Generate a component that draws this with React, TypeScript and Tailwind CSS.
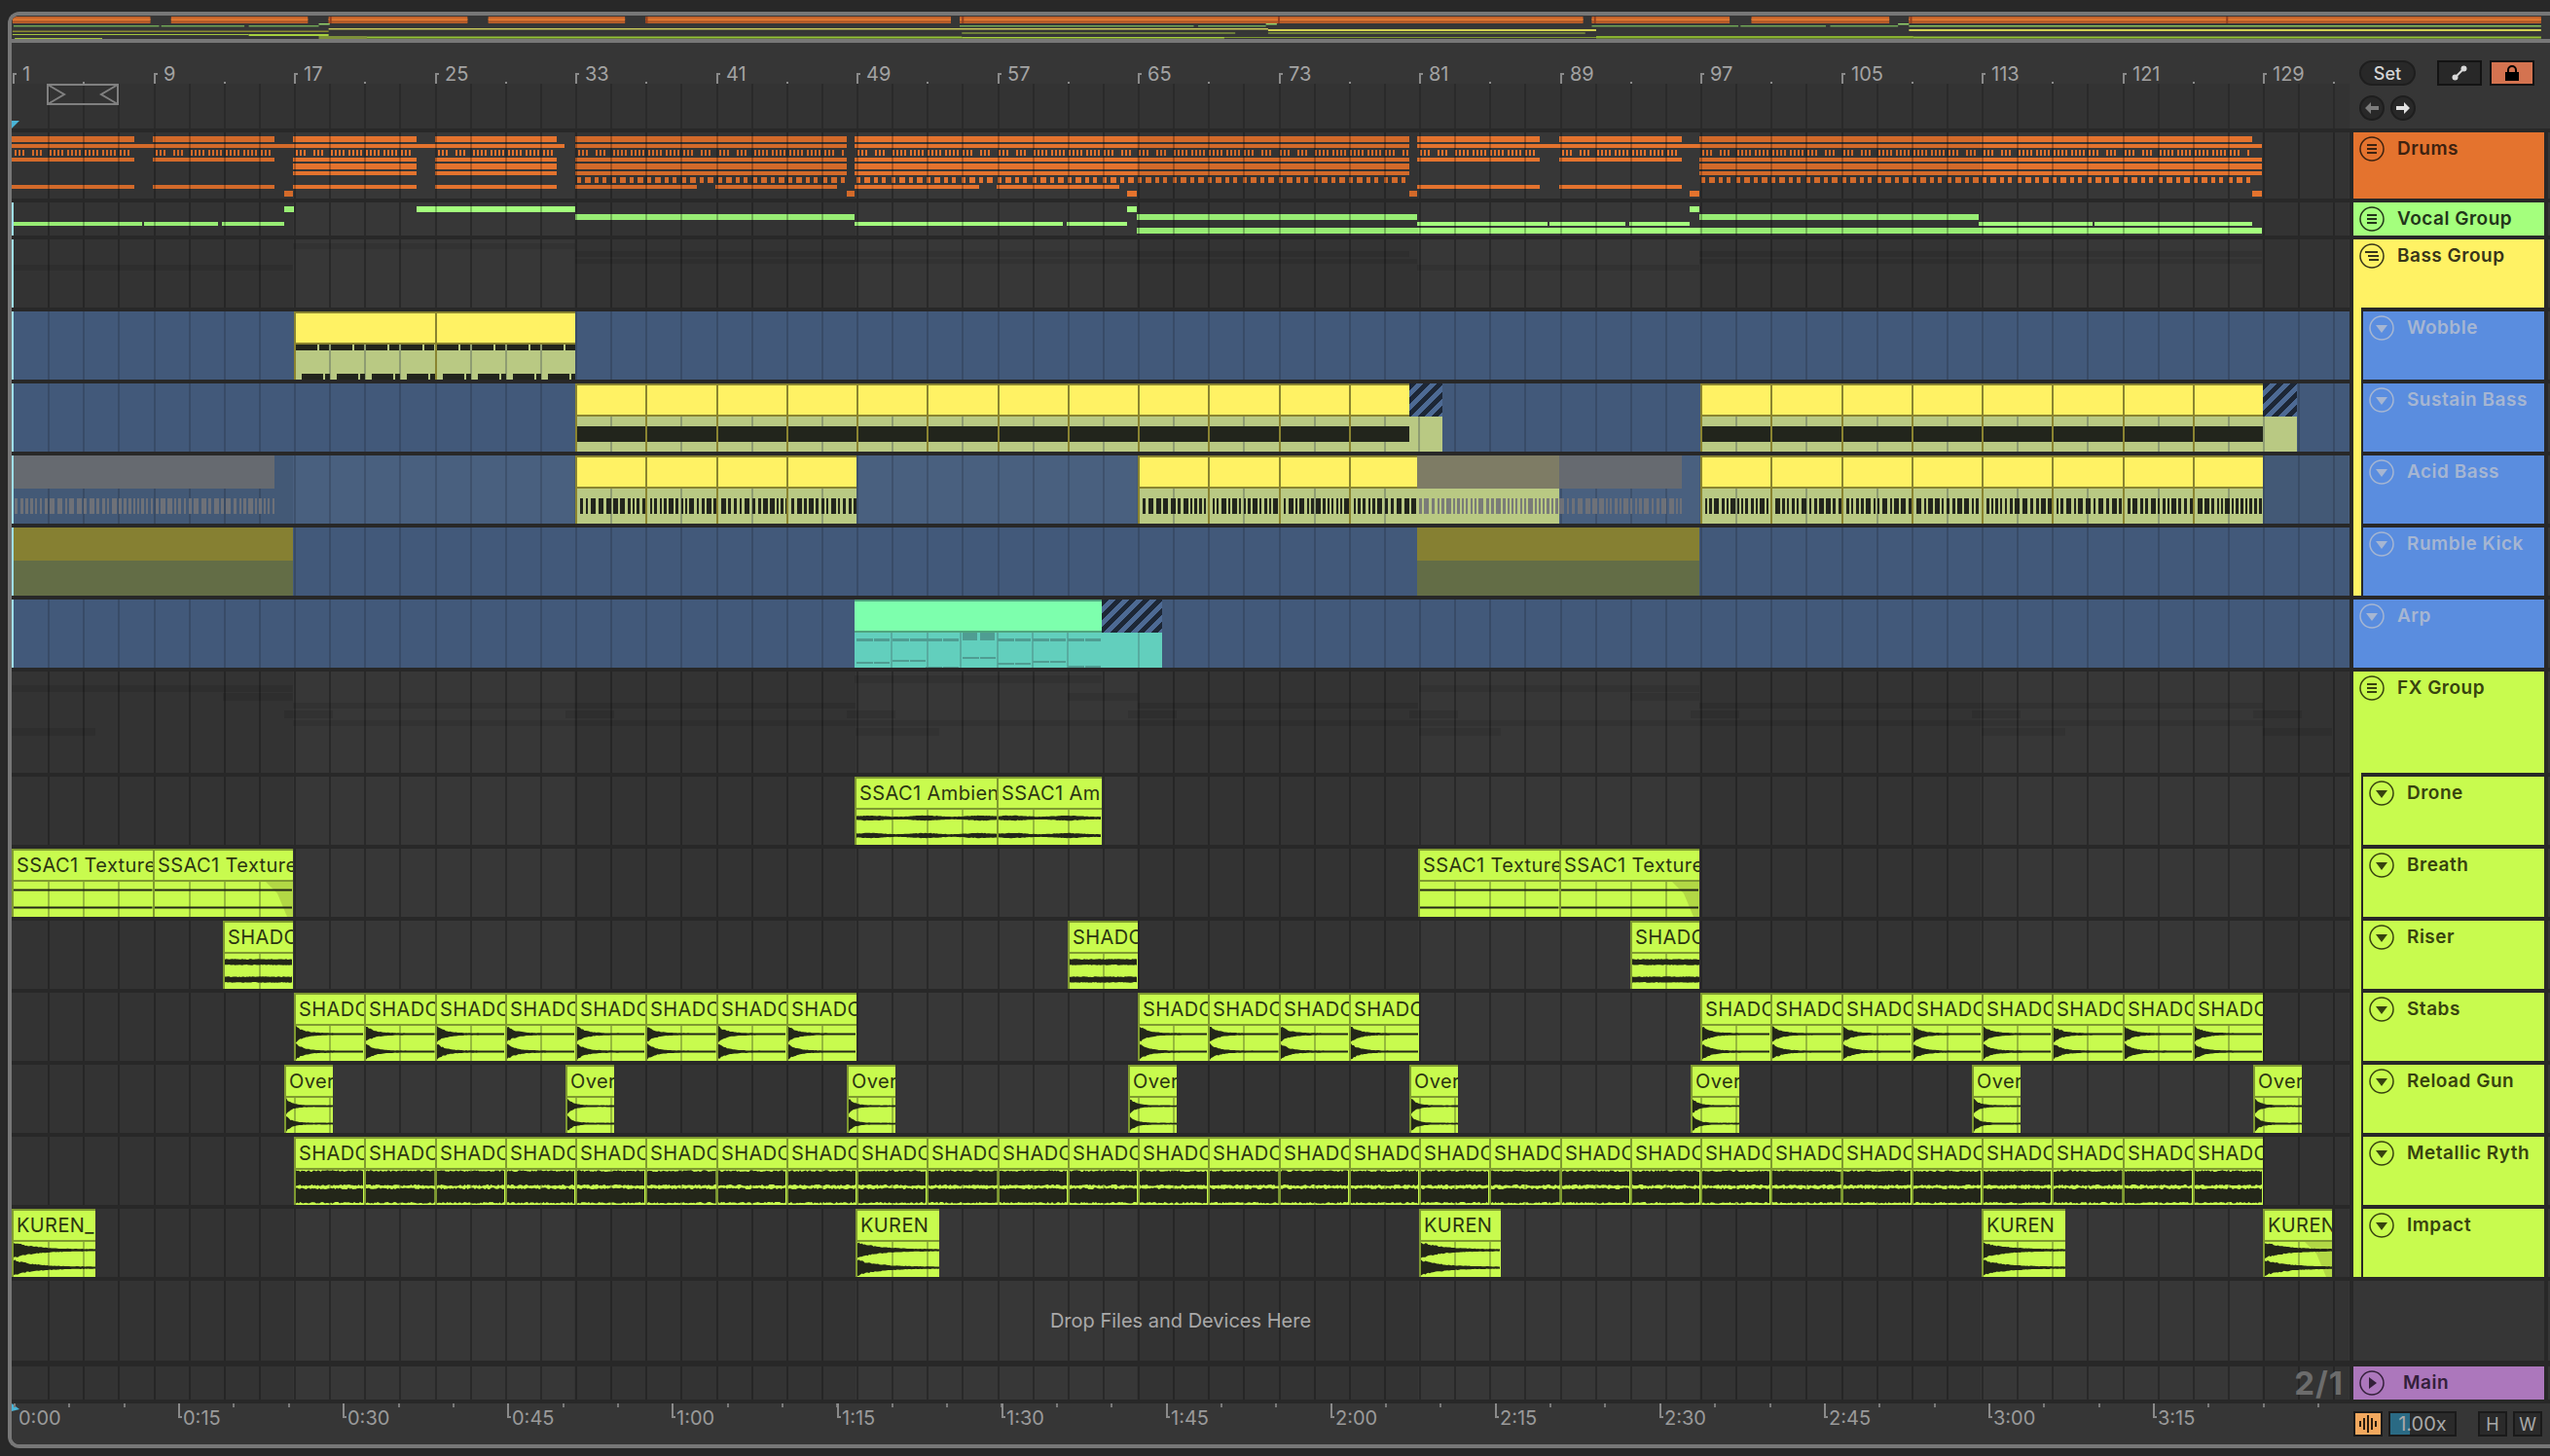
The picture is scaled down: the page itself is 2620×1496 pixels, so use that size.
import { ReactNode } from 'react';

type Seg = [number, number];

const barX = (bar: number) => Math.round(13 + 18.0625 * (bar - 1));
const rnd = (i: number) => {
  const v = Math.sin(i * 12.9898) * 43758.5453;
  return v - Math.floor(v);
};

const GRID = Array.from({ length: 66 }, (_, i) => barX(3 + i * 2));
const SHADE: Seg[] = [[1, 17], [33, 49], [65, 81], [97, 113], [129, 134]];

// all note drawings use page coordinates through the viewBox
const Bars = ({ segs, y, h, fill, opacity }: { segs: Seg[]; y: number; h: number; fill: string; opacity?: number }) => (
  <>
    {segs.map(([a, b]) => (
      <rect key={a} x={a} y={y} width={b - a} height={h} fill={fill} opacity={opacity} />
    ))}
  </>
);

const Lane = ({ h, blue, light, under, children, cyan }: { h: number; blue?: boolean; light?: boolean; under?: ReactNode; children?: ReactNode; cyan?: boolean }) => (
  <div
    className={`relative w-[2402px] shrink-0 overflow-hidden ${light ? 'bg-[#49607f]' : blue ? 'bg-[#42597a]' : 'bg-[#373737]'}`}
    style={{ height: h }}
  >
    {under}
    {(!blue || light) &&
      SHADE.map(([a, b]) => (
        <div key={a} className="absolute top-0 bottom-0 bg-black/[0.07]" style={{ left: barX(a) - 13, width: Math.min(barX(b), 2414) - barX(a) }} />
      ))}
    {GRID.map((x) => (
      <div key={x} className={`absolute top-0 bottom-0 w-[2px] ${blue ? 'bg-black/15' : 'bg-black/25'}`} style={{ left: x - 12 }} />
    ))}
    {children}
    {cyan && <div className="absolute top-0 bottom-0 left-0 w-[2px] bg-[#9fdfe9]" />}
  </div>
);

const NoteSvg = ({ y, h, children }: { y: number; h: number; children: ReactNode }) => (
  <svg className="absolute top-0 left-0" width={2402} height={h} viewBox={`12 ${y} 2402 ${h}`}>
    {children}
  </svg>
);

const channel = (cy: number, w: number, amp: (x: number) => number, seed: number) => {
  const top: string[] = [];
  const bot: string[] = [];
  for (let x = 0; x <= w; x += 1.5) {
    const a = amp(x);
    top.push(`${x},${(cy - a * (0.85 + 0.25 * rnd(x + seed))).toFixed(1)}`);
    bot.unshift(`${x},${(cy + a * (0.85 + 0.25 * rnd(x + seed + 7))).toFixed(1)}`);
  }
  return [...top, ...bot].join(' ');
};

type Wave = 'stab' | 'over' | 'dense' | 'drone' | 'line' | 'riser' | 'kuren';
const AMP: Record<Wave, (x: number) => number> = {
  stab: (x) => 7 * Math.exp(-x / 9) + 1,
  over: (x) => 7 * Math.exp(-x / 6) + 0.9,
  dense: () => 7.5,
  drone: (x) => 2 + Math.sin(x / 9) * 0.6,
  line: () => 1,
  riser: () => 3,
  kuren: (x) => 7 * Math.exp(-x / 22) + 1,
};

const AudioClip = ({ x0, x1, title, wave, fade }: { x0: number; x1: number; title: string; wave: Wave; fade?: boolean }) => {
  const w = x1 - x0 - 2;
  const lines = GRID.filter((g) => g > x0 + 4 && g < x1 - 1);
  return (
    <div
      className="absolute top-0 bottom-0 flex flex-col overflow-hidden border-t-2 border-l-2 border-[#7f9a30] bg-[#c8fb4e]"
      style={{ left: x0 - 12, width: x1 - x0 }}
    >
      <div className="h-[32px] shrink-0 overflow-hidden whitespace-nowrap border-b-2 border-[#7f9a30] pl-[3px] text-[20px] leading-[30px] tracking-[0.02em] text-[#2b3512]">
        {title}
      </div>
      <svg className="block shrink-0" width={w} height={36}>
        {fade && <polygon points={`${w - 28},0 ${w},0 ${w},36 ${w - 6},36 ${w - 16},12`} fill="#b2d845" />}
        {lines.map((g) => (
          <rect key={g} x={g - x0 - 2} y={0} width={2} height={36} fill="#95b93c" />
        ))}
        <polygon points={channel(8.5, w, AMP[wave], x0)} fill="#232619" />
        <polygon points={channel(26.5, w, AMP[wave], x0 + 31)} fill="#232619" />
      </svg>
    </div>
  );
};

const MidiClip = ({ x0, x1, kind }: { x0: number; x1: number; kind: 'wobble' | 'sustain' | 'acid' }) => {
  const w = x1 - x0 - 2;
  const lines = GRID.filter((g) => g > x0 + 4 && g < x1 - 1);
  const notes: ReactNode[] = [];
  if (kind === 'sustain') notes.push(<rect key="s" x={0} y={10} width={w} height={16} fill="#22251c" />);
  if (kind === 'wobble') {
    for (let i = 0; i * 36 < w; i++) {
      notes.push(<rect key={`a${i}`} x={i * 36} y={0} width={22} height={6} fill="#22251c" />);
      notes.push(<rect key={`b${i}`} x={i * 36 + 24} y={0} width={10} height={6} fill="#22251c" />);
      notes.push(<rect key={`c${i}`} x={i * 36 + 6} y={30} width={22} height={6} fill="#22251c" />);
      notes.push(<rect key={`d${i}`} x={i * 36 + 30} y={30} width={5} height={6} fill="#22251c" />);
    }
  }
  if (kind === 'acid') {
    let x = 3;
    let i = x0;
    while (x < w) {
      const nw = rnd(i) > 0.7 ? 5 : rnd(i) > 0.35 ? 3 : 2;
      notes.push(<rect key={`n${x}`} x={x} y={10} width={nw} height={16} fill="#22251c" />);
      x += nw + (rnd(i + 3) > 0.6 ? 3 : 2);
      i++;
    }
  }
  return (
    <div
      className="absolute top-0 bottom-0 flex flex-col overflow-hidden border-t-2 border-l-2 border-[#8a8430] bg-[#fff264]"
      style={{ left: x0 - 12, width: x1 - x0 }}
    >
      <div className="h-[32px] shrink-0 border-b-2 border-[#8a8430]" />
      <svg className="block shrink-0 bg-[#b9c983]" width={w} height={36}>
        {lines.map((g) => (
          <rect key={g} x={g - x0 - 2} y={0} width={2} height={36} fill="#8e9c72" />
        ))}
        {notes}
      </svg>
    </div>
  );
};

const Hatch = ({ x0, x1 }: { x0: number; x1: number }) => (
  <div
    className="absolute top-0 h-[34px] bg-[repeating-linear-gradient(135deg,#1d2736_0,#1d2736_5px,#4d6a94_5px,#4d6a94_10px)]"
    style={{ left: x0 - 12, width: x1 - x0 }}
  />
);

const Tail = ({ x0, x1, line }: { x0: number; x1: number; line: number }) => (
  <div className="absolute bottom-0 h-[36px] bg-[#b9c983]" style={{ left: x0 - 12, width: x1 - x0 }}>
    <div className="absolute top-0 bottom-0 w-[2px] bg-[#8e9c72]" style={{ left: line - x0 }} />
  </div>
);

const every = (from: number, to: number, step: number) => {
  const out: Seg[] = [];
  for (let b = from; b < to; b += step) out.push([barX(b), barX(b + step)]);
  return out;
};

// drum lane

const secA: Seg[] = [[12, 138], [157, 282], [301, 428], [447, 572]];
const secB: Seg[] = [[591, 870], [878, 1448]];
const secC: Seg[] = [[1456, 1582], [1602, 1728]];

const ticks = (segs: Seg[]) => {
  const out: Seg[] = [];
  segs.forEach(([a, b]) => {
    for (let i = 0; a + i * 18.0625 < b; i++) {
      const s = a + i * 18.0625;
      const n = [3, 3, 4, 4, 4, 4, 3, 3][i % 8];
      for (let k = 0; k < n; k++) {
        const t = Math.round(s + 3 + k * 4);
        if (t + 2 <= b) out.push([t, t + 2]);
      }
    }
  });
  return out;
};

const blocks = (segs: Seg[]) => {
  const out: Seg[] = [];
  segs.forEach(([a, b]) => {
    for (let i = 0; a + i * 18.0625 < b; i++) {
      const s = Math.round(a + 2 + i * 18.0625);
      if (s + 4 <= b) out.push([s, s + 4]);
      const w = i % 4 === 1 ? 4 : 6;
      if (s + 8 + w <= b) out.push([s + 8, s + 8 + w]);
    }
  });
  return out;
};

const DrumNotes = () => {
  const c = '#e4732e';
  return (
    <NoteSvg y={136} h={68}>
      <Bars segs={[...secA, ...secB, ...secC, [1746, 2314]]} y={140} h={6} fill={c} />
      <Bars segs={[[12, 580], ...secB, [1456, 2324]]} y={148} h={4} fill={c} />
      <Bars segs={ticks([...secA, ...secB, ...secC, [1746, 2314]])} y={154} h={6} fill={c} />
      <Bars segs={[...secA, ...secB, ...secC, [1746, 2324]]} y={162} h={4} fill={c} />
      <Bars segs={[[301, 428], [447, 572], ...secB, [1746, 2324]]} y={168} h={6} fill={c} />
      <Bars segs={[[301, 428], [447, 572], ...secB, [1746, 2324]]} y={176} h={4} fill={c} />
      <Bars segs={blocks([...secB, [1746, 2314]])} y={182} h={6} fill={c} />
      <Bars segs={[...secA, [591, 716], [735, 860], [878, 1006], [1024, 1150], ...secC]} y={190} h={4} fill={c} />
      <Bars segs={[[292, 301], [870, 878], [1158, 1168], [1448, 1456], [1736, 1746], [2314, 2324]]} y={196} h={6} fill={c} />
    </NoteSvg>
  );
};

const VocalNotes = () => {
  const c = '#a4ff7d';
  return (
    <NoteSvg y={208} h={34}>
      <Bars segs={[[292, 302], [428, 591], [1158, 1168], [1736, 1746]]} y={212} h={6} fill={c} />
      <Bars segs={[[591, 878], [1168, 1456], [1746, 2033]]} y={220} h={6} fill={c} />
      <Bars segs={[[13, 146], [148, 224], [228, 292], [878, 1092], [1096, 1158], [1456, 1590], [1592, 1670], [1674, 1736], [2033, 2150], [2152, 2314]]} y={228} h={4} fill={c} />
      <Bars segs={[[1168, 2324]]} y={234} h={6} fill={c} />
    </NoteSvg>
  );
};

const BassBands = () => (
  <NoteSvg y={246} h={70}>
    <Bars segs={[[301, 591]]} y={250} h={6} fill="#000" opacity={0.08} />
    <Bars segs={[[591, 1448], [1746, 2324]]} y={258} h={6} fill="#000" opacity={0.08} />
    <Bars segs={[[591, 1456], [1746, 2324]]} y={266} h={5} fill="#000" opacity={0.08} />
    <Bars segs={[[12, 301], [1456, 1746]]} y={272} h={6} fill="#000" opacity={0.08} />
  </NoteSvg>
);

const overs = [292, 581, 870, 1159, 1448, 1737, 2026, 2315];

const FxBands = () => (
  <NoteSvg y={690} h={104}>
    <Bars segs={[[878, 1132]]} y={694} h={8} fill="#000" opacity={0.08} />
    <Bars segs={[[12, 301], [1458, 1746]]} y={704} h={7} fill="#000" opacity={0.08} />
    <Bars segs={[[229, 301], [1097, 1169], [1675, 1746]]} y={712} h={8} fill="#000" opacity={0.08} />
    <Bars segs={[[301, 879], [1169, 1457], [1746, 2325]]} y={722} h={6} fill="#000" opacity={0.08} />
    <Bars segs={overs.map((x) => [x, x + 50] as Seg)} y={730} h={8} fill="#000" opacity={0.08} />
    <Bars segs={[[301, 2325]]} y={740} h={6} fill="#000" opacity={0.08} />
    <Bars segs={[[12, 98], [879, 965], [1458, 1542], [2036, 2122], [2325, 2396]]} y={748} h={8} fill="#000" opacity={0.08} />
  </NoteSvg>
);

const ArpLower = () => {
  const spans = [880, 917, 951, 989, 1025, 1061, 1097];
  const lows = [30, 28, 35, 25, 31, 29, 34];
  return (
    <div className="absolute top-0 bottom-0 flex flex-col" style={{ left: 878 - 12, width: 254 }}>
      <div className="h-[34px] shrink-0 border-t-2 border-b-2 border-[#4fa57e] bg-[#7dffad]" />
      <svg className="block bg-[#62cfbd]" width={254} height={36} viewBox="878 0 254 36">
        {spans.map((x, i) => (
          <g key={x} fill="#4f9d92">
            <rect x={x + 35} y={0} width={2} height={36} fill="#57aca0" />
            {i === 3 ? (
              <>
                <rect x={x} y={0} width={15} height={8} />
                <rect x={x + 18} y={0} width={15} height={8} />
              </>
            ) : (
              <>
                <rect x={x} y={6} width={17} height={3} />
                <rect x={x + 18} y={6} width={16} height={3} />
              </>
            )}
            <rect x={x} y={lows[i]} width={17} height={2} />
            <rect x={x + 18} y={lows[i]} width={16} height={2} />
          </g>
        ))}
      </svg>
    </div>
  );
};

// group / track headers

const DIM = 'text-[#a6b6d2]';

const Icon = ({ kind }: { kind: 'eq' | 'stag' | 'down' | 'right' }) => (
  <svg width={26} height={26} viewBox="0 0 26 26" className="shrink-0" fill="currentColor" stroke="none">
    <circle cx={13} cy={13} r={12} fill="none" stroke="currentColor" strokeWidth={1.5} />
    {kind === 'eq' && (
      <>
        <rect x={8} y={8} width={10} height={2} />
        <rect x={8} y={12} width={10} height={2} />
        <rect x={8} y={16} width={10} height={2} />
      </>
    )}
    {kind === 'stag' && (
      <>
        <rect x={6} y={8} width={13} height={2} />
        <rect x={9} y={12} width={11} height={2} />
        <rect x={10} y={16} width={10} height={2} />
      </>
    )}
    {kind === 'down' && <polygon points="7,10 19,10 13,18" />}
    {kind === 'right' && <polygon points="10,7 10,19 18,13" />}
  </svg>
);

const Head = ({ name, bg, text, icon, gap = 'gap-[13px]' }: { name: string; bg: string; text: string; icon: 'eq' | 'stag' | 'down' | 'right'; gap?: string }) => (
  <div className={`flex min-w-0 flex-1 items-start pt-1 pl-1.5 ${bg} ${text} ${gap}`}>
    <Icon kind={icon} />
    <span className="text-[19px] font-semibold leading-[26px] tracking-[0.5px] whitespace-nowrap">{name}</span>
  </div>
);

const Row = ({ lane, head }: { lane: ReactNode; head: ReactNode }) => (
  <div className="flex shrink-0 items-stretch">
    {lane}
    <div className="ml-1 flex w-[196px] shrink-0">{head}</div>
    <div className="ml-1 w-[2px] shrink-0 bg-[#363636]" />
  </div>
);

const Child = ({ name, strip, bg, text }: { name: string; strip: string; bg: string; text: string }) => (
  <>
    <div className={`-mt-1 w-2 shrink-0 ${strip}`} />
    <div className="w-[2px] shrink-0" />
    <Head name={name} bg={bg} text={text} icon="down" />
  </>
);

// overview strip across the top

const ox = (x: number) => 2 + (x - 13) * 1.1237;

const Overview = () => {
  const os = (segs: Seg[]) => segs.map(([a, b]) => [ox(a), ox(b)] as Seg);
  const orange = os([...secA, ...secB, ...secC, [1746, 2324]]);
  return (
    <svg className="block h-[24px] w-full bg-[#363636]" width={2608} height={24} viewBox="0 16 2608 24">
      <Bars segs={orange} y={17} h={7} fill="#c2622b" />
      <Bars segs={orange} y={19} h={2} fill="#dc7530" />
      <Bars segs={orange} y={22} h={1} fill="#a85426" />
      {every(17, 129, 16).map(([a]) => (
        <rect key={a} x={ox(a)} y={17} width={2} height={7} fill="#96401f" />
      ))}
      <Bars segs={os([[13, 146], [148, 224], [228, 292], [878, 1092], [1096, 1158], [1456, 1590], [1592, 1670], [1674, 1736]])} y={26} h={1.5} fill="#6fa455" />
      <Bars segs={os([[292, 302], [1158, 1168], [1736, 1746]])} y={24} h={1.5} fill="#93d36c" />
      <Bars segs={os([[1746, 2324]])} y={26} h={1.5} fill="#86c05c" />
      <Bars segs={os([[12, 301]])} y={31.5} h={1.5} fill="#8a8a30" />
      <Bars segs={os([[301, 1160]])} y={29} h={1.5} fill="#c8c85a" />
      <Bars segs={os([[1160, 1460], [1746, 2324]])} y={30} h={2} fill="#d2d052" />
      <Bars segs={os([[12, 228]])} y={35} h={1} fill="#a3c63e" />
      <Bars segs={os([[228, 301]])} y={35} h={2} fill="#a6d03f" />
      <Bars segs={os([[880, 1130], [1160, 1450]])} y={33.5} h={1} fill="#a3c63e" />
      <Bars segs={os([[14, 94]])} y={39} h={1} fill="#a3c63e" />
      <Bars segs={os([[292, 336]])} y={37} h={3} fill="#7d8f3a" />
      <Bars segs={os([[336, 880]])} y={37.5} h={2} fill="#93c235" />
      <Bars segs={os([[880, 1120]])} y={38} h={1.5} fill="#a4cf3c" />
      <Bars segs={os([[1120, 1460]])} y={38} h={1} fill="#7d9a30" />
      <Bars segs={os([[1460, 1750]])} y={37} h={2.5} fill="#88b030" />
      <Bars segs={os([[1750, 2324]])} y={37.5} h={2} fill="#93c235" />
    </svg>
  );
};

// rulers

const BAR_LABELS = Array.from({ length: 17 }, (_, i) => 1 + i * 8);
const TIMES = ['0:00', '0:15', '0:30', '0:45', '1:00', '1:15', '1:30', '1:45', '2:00', '2:15', '2:30', '2:45', '3:00', '3:15'];

const TopRuler = () => (
  <div className="relative h-[88px] w-[2402px] shrink-0 overflow-hidden text-[#a3a3a3]">
    <div className="absolute inset-x-0 top-[42px] bottom-0 bg-[#333333]" />
    {GRID.map((x) => (
      <div key={x} className="absolute top-[42px] bottom-0 w-[2px] bg-[#2a2a2a]" style={{ left: x - 12 }} />
    ))}
    {BAR_LABELS.map((b) => (
      <div key={b} className="absolute top-0 h-[42px]" style={{ left: barX(b) - 12 }}>
        <div className="absolute top-[32px] left-0 h-[10px] w-[2px] bg-[#8a8a8a]" />
        <div className="absolute top-[31px] left-0 h-[2px] w-[4px] bg-[#8a8a8a]" />
        <div className="absolute top-[40px] left-[72px] h-[2px] w-[2px] bg-[#8a8a8a]" />
        <span className="absolute top-[20px] left-[10px] text-[20px] leading-[24px]">{b}</span>
      </div>
    ))}
    <svg className="absolute top-[42px] left-[36px]" width={74} height={22} fill="none" stroke="#808080" strokeWidth={2}>
      <rect x={1} y={1} width={72} height={20} />
      <polyline points="1,1 18,11 1,21" />
      <polyline points="73,1 56,11 73,21" />
    </svg>
    <svg className="absolute bottom-0 left-0" width={8} height={8}>
      <polygon points="0,0 8,0 0,8" fill="#4ab4d6" />
    </svg>
  </div>
);

const BottomRuler = () => (
  <div className="relative h-[42px] w-[2402px] shrink-0 overflow-hidden text-[#9a9a9a]">
    <svg className="absolute top-0 left-0" width={8} height={8}>
      <polygon points="0,0 8,6 0,8" fill="#4ab4d6" />
    </svg>
    {Array.from({ length: 43 }, (_, i) => i).map((i) => (
      <div key={i} className="absolute top-0 h-[4px] w-[2px] bg-[#7a7a7a]" style={{ left: Math.round(2 + i * 56.36) }} />
    ))}
    {TIMES.map((t, i) => (
      <div key={t} className="absolute top-0" style={{ left: Math.round(2 + i * 169.1) }}>
        {i > 0 && <div className="absolute top-0 left-0 h-[15px] w-[2px] bg-[#8a8a8a]" />}
        {i > 0 && <div className="absolute top-[13px] left-0 h-[2px] w-[4px] bg-[#8a8a8a]" />}
        <span className="absolute top-[3px] left-[5px] text-[20px] leading-[24px]">{t}</span>
      </div>
    ))}
  </div>
);

const comb = (from: number, to: number, seed: number) => {
  const out: Seg[] = [];
  let x = from;
  let i = seed;
  while (x < to) {
    const w = rnd(i) > 0.7 ? 5 : rnd(i) > 0.35 ? 3 : 2;
    out.push([x, Math.min(x + w, to)]);
    x += w + (rnd(i + 3) > 0.6 ? 3 : 2);
    i++;
  }
  return out;
};

const blue = 'bg-[#5a8ddf]';
const yellowStrip = 'bg-[#fff264]';
const limeStrip = 'bg-[#c8fb4e]';
const LIME = 'bg-[#c8fb4e]';
const LIME_TEXT = 'text-[#37430f]';

export default function App() {
  return (
    <div className="h-[1496px] w-[2620px] overflow-hidden bg-[#282828] pt-3 pl-2 font-['Inter',sans-serif]">
      <div className="flex h-[1476px] w-[2612px] flex-col overflow-hidden rounded-l-xl border-4 border-r-0 border-[#777777]">
        <Overview />
        <div className="h-1 shrink-0 bg-[#777777]" />

        <div className="flex flex-1 flex-col gap-1">
          {/* top ruler + view controls */}
          <div className="flex h-[88px] shrink-0 bg-[#363636]">
            <TopRuler />
            <div className="flex flex-col gap-2.5 pt-[18px] pl-2.5">
              <div className="flex items-center">
                <div className="flex h-[26px] w-[58px] items-center justify-center rounded-full border-2 border-[#1e1e1e] bg-[#282828] text-[18px] font-medium text-[#d5d5d5]">
                  Set
                </div>
                <div className="ml-[22px] flex h-[26px] w-[46px] items-center justify-center border-2 border-[#131313] bg-[#282828]">
                  <svg width={16} height={16} viewBox="0 0 16 16" fill="#d8d8d8">
                    <circle cx={3.5} cy={12.5} r={3} />
                    <circle cx={12.5} cy={3.5} r={3} />
                    <line x1={3.5} y1={12.5} x2={12.5} y2={3.5} stroke="#d8d8d8" strokeWidth={2} />
                  </svg>
                </div>
                <div className="ml-2 flex h-[26px] w-[46px] items-center justify-center border-2 border-[#131313] bg-[#d47350]">
                  <svg width={16} height={16} viewBox="0 0 16 16">
                    <path d="M4 8 V5 a4 4 0 0 1 8 0 V8" fill="none" stroke="#000" strokeWidth={2} />
                    <rect x={1} y={7} width={14} height={9} fill="#000" />
                  </svg>
                </div>
              </div>
              <div className="flex gap-1.5">
                <div className="flex h-[26px] w-[26px] items-center justify-center rounded-full border-2 border-[#1e1e1e] bg-[#282828]">
                  <svg width={14} height={12} viewBox="0 0 14 12" fill="#7c7c7c">
                    <polygon points="0,6 6,0 6,4 14,4 14,8 6,8 6,12" />
                  </svg>
                </div>
                <div className="flex h-[26px] w-[26px] items-center justify-center rounded-full border-2 border-[#1e1e1e] bg-[#282828]">
                  <svg width={14} height={12} viewBox="0 0 14 12" fill="#e2e2e2">
                    <polygon points="14,6 8,0 8,4 0,4 0,8 8,8 8,12" />
                  </svg>
                </div>
              </div>
            </div>
          </div>

          <Row lane={<Lane h={68} under={<DrumNotes />} />} head={<Head name="Drums" bg="bg-[#e4732e]" text="text-[#3d2210]" icon="eq" />} />
          <Row lane={<Lane h={34} cyan under={<VocalNotes />} />} head={<Head name="Vocal Group" bg="bg-[#a4ff7d]" text="text-[#22351a]" icon="eq" />} />
          <Row lane={<Lane h={70} cyan under={<BassBands />} />} head={<Head name="Bass Group" bg="bg-[#fff264]" text="text-[#38351a]" icon="stag" />} />

          <Row
            lane={
              <Lane h={70} blue cyan>
                {[[barX(17), barX(25)], [barX(25), 591]].map(([a, b]) => (
                  <MidiClip key={a} x0={a} x1={b} kind="wobble" />
                ))}
              </Lane>
            }
            head={<Child name="Wobble" strip={yellowStrip} bg={blue} text={DIM} />}
          />
          <Row
            lane={
              <Lane h={70} blue cyan>
                {[...every(33, 81, 4), ...every(97, 129, 4)].map(([a, b]) => (
                  <MidiClip key={a} x0={a} x1={b === 1458 ? 1448 : b} kind="sustain" />
                ))}
                <Hatch x0={1448} x1={1482} />
                <Tail x0={1448} x1={1482} line={1457} />
                <Hatch x0={2325} x1={2360} />
                <Tail x0={2325} x1={2360} line={2325} />
              </Lane>
            }
            head={<Child name="Sustain Bass" strip={yellowStrip} bg={blue} text={DIM} />}
          />
          <Row
            lane={
              <Lane h={70} blue light cyan>
                <div className="absolute top-0 left-0 h-[34px] w-[270px] bg-[#666a70]" />
                <NoteSvg y={468} h={70}>
                  <Bars segs={comb(15, 282, 3)} y={512} h={16} fill="#6e7178" />
                </NoteSvg>
                {[...every(33, 49, 4), ...every(65, 81, 4), ...every(97, 129, 4)].map(([a, b]) => (
                  <MidiClip key={a} x0={a} x1={b} kind="acid" />
                ))}
                <div className="absolute top-0 h-[34px] w-[146px] bg-[#7e7c65]" style={{ left: 1456 - 12 }} />
                <div className="absolute top-[34px] bottom-0 w-[146px] bg-[#b9c983]" style={{ left: 1456 - 12 }} />
                <div className="absolute top-0 h-[34px] w-[126px] bg-[#666a70]" style={{ left: 1602 - 12 }} />
                <NoteSvg y={468} h={70}>
                  <Bars segs={comb(1458, 1602, 40)} y={512} h={16} fill="#7a7c78" />
                  <Bars segs={comb(1602, 1728, 90)} y={512} h={16} fill="#6e7178" />
                </NoteSvg>
              </Lane>
            }
            head={<Child name="Acid Bass" strip={yellowStrip} bg={blue} text={DIM} />}
          />
          <Row
            lane={
              <Lane h={70} blue cyan>
                {[[12, 301], [1456, 1746]].map(([a, b]) => (
                  <div key={a} className="absolute top-0 bottom-0 flex flex-col" style={{ left: a - 12, width: b - a }}>
                    <div className="h-[34px] bg-[#868032]" />
                    <div className="flex-1 bg-[#636d46]" />
                  </div>
                ))}
              </Lane>
            }
            head={<Child name="Rumble Kick" strip={yellowStrip} bg={blue} text={DIM} />}
          />
          <Row
            lane={
              <Lane h={70} blue cyan>
                <ArpLower />
                <Hatch x0={1132} x1={1194} />
                <div className="absolute bottom-0 h-[36px] w-[62px] bg-[#62cfbd]" style={{ left: 1132 - 12 }}>
                  <div className="absolute top-0 bottom-0 left-[37px] w-[2px] bg-[#57aca0]" />
                </div>
              </Lane>
            }
            head={<Head name="Arp" bg={blue} text={DIM} icon="down" />}
          />
          <Row lane={<Lane h={104} under={<FxBands />} />} head={<Head name="FX Group" bg={LIME} text={LIME_TEXT} icon="eq" />} />

          <Row
            lane={
              <Lane h={70}>
                <AudioClip x0={878} x1={1024} title="SSAC1 Ambien" wave="drone" />
                <AudioClip x0={1024} x1={1132} title="SSAC1 Am" wave="drone" />
              </Lane>
            }
            head={<Child name="Drone" strip={limeStrip} bg={LIME} text={LIME_TEXT} />}
          />
          <Row
            lane={
              <Lane h={70}>
                <AudioClip x0={12} x1={157} title="SSAC1 Texture" wave="line" />
                <AudioClip x0={157} x1={301} title="SSAC1 Texture" wave="line" fade />
                <AudioClip x0={1457} x1={1602} title="SSAC1 Texture" wave="line" />
                <AudioClip x0={1602} x1={1746} title="SSAC1 Texture" wave="line" fade />
              </Lane>
            }
            head={<Child name="Breath" strip={limeStrip} bg={LIME} text={LIME_TEXT} />}
          />
          <Row
            lane={
              <Lane h={70}>
                {[[229, 301], [1097, 1169], [1675, 1746]].map(([a, b]) => (
                  <AudioClip key={a} x0={a} x1={b} title="SHADO" wave="riser" />
                ))}
              </Lane>
            }
            head={<Child name="Riser" strip={limeStrip} bg={LIME} text={LIME_TEXT} />}
          />
          <Row
            lane={
              <Lane h={70}>
                {[...every(17, 49, 4), ...every(65, 81, 4), ...every(97, 129, 4)].map(([a, b]) => (
                  <AudioClip key={a} x0={a} x1={b} title="SHADO" wave="stab" />
                ))}
              </Lane>
            }
            head={<Child name="Stabs" strip={limeStrip} bg={LIME} text={LIME_TEXT} />}
          />
          <Row
            lane={
              <Lane h={70}>
                {overs.map((x) => (
                  <AudioClip key={x} x0={x} x1={x + 50} title="Over" wave="over" />
                ))}
              </Lane>
            }
            head={<Child name="Reload Gun" strip={limeStrip} bg={LIME} text={LIME_TEXT} />}
          />
          <Row
            lane={
              <Lane h={70}>
                {every(17, 129, 4).map(([a, b]) => (
                  <AudioClip key={a} x0={a} x1={b} title="SHADO" wave="dense" />
                ))}
              </Lane>
            }
            head={<Child name="Metallic Ryth" strip={limeStrip} bg={LIME} text={LIME_TEXT} />}
          />
          <Row
            lane={
              <Lane h={70}>
                {[[12, 98], [879, 965], [1458, 1542], [2036, 2122], [2325, 2396]].map(([a, b]) => (
                  <AudioClip key={a} x0={a} x1={b} title={a === 12 ? 'KUREN_' : 'KUREN'} wave="kuren" fade={a === 2325} />
                ))}
              </Lane>
            }
            head={<Child name="Impact" strip={limeStrip} bg={LIME} text={LIME_TEXT} />}
          />

          {/* drop area */}
          <Row
            lane={
              <Lane h={82}>
                <div className="absolute inset-0 flex items-center justify-center text-[20px] text-[#a9a9a9]">Drop Files and Devices Here</div>
              </Lane>
            }
            head={<div className="flex-1 bg-[#363636]" />}
          />

          <div className="mt-[2px]">
            <Row
              lane={
                <Lane h={34}>
                  <div className="absolute top-0 right-[6px] text-[33px] font-bold leading-[34px] tracking-[1px] text-[#6c6c6c]">2/1</div>
                </Lane>
              }
              head={<Head name="Main" bg="bg-[#ac77bc]" text="text-[#33203a]" icon="right" gap="gap-[19px]" />}
            />
          </div>

          {/* time ruler + zoom controls */}
          <div className="flex flex-1 bg-[#363636]">
            <BottomRuler />
            <div className="flex items-start gap-1.5 pt-2 pl-1">
              <div className="flex h-[26px] w-[30px] items-center justify-center border-2 border-[#1a1a1a] bg-[#f2a85e]">
                <svg width={20} height={18} viewBox="0 0 20 18" fill="#2a1c0e">
                  <rect x={1} y={6} width={2} height={6} />
                  <rect x={5} y={3} width={2} height={12} />
                  <rect x={9} y={0} width={2} height={18} />
                  <rect x={13} y={3} width={2} height={12} />
                  <rect x={17} y={6} width={2} height={6} />
                </svg>
              </div>
              <div className="relative flex h-[26px] w-[70px] items-center justify-center border-2 border-[#1a1a1a] bg-[#2a2a2a] text-[20px] leading-[22px] text-[#a9a9a9]">
                <div className="absolute top-0 bottom-0 left-0 w-5 bg-[#2a6a84]" />
                <span className="relative">1.00x</span>
              </div>
              <div className="ml-4 flex h-[26px] w-[30px] items-center justify-center border-2 border-[#1a1a1a] bg-[#2a2a2a] text-[18px] text-[#a9a9a9]">H</div>
              <div className="flex h-[26px] w-[30px] items-center justify-center border-2 border-[#1a1a1a] bg-[#2a2a2a] text-[18px] text-[#a9a9a9]">W</div>
            </div>
          </div>
        </div>
      </div>
    </div>
  );
}
